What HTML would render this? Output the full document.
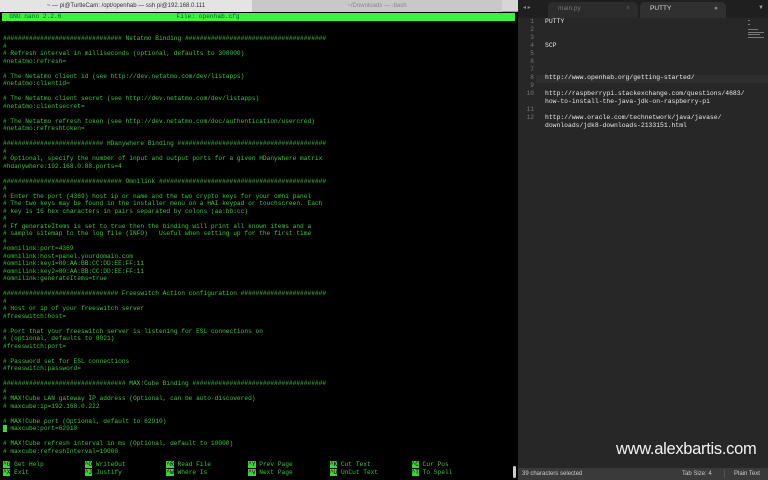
<!DOCTYPE html>
<html><head><meta charset="utf-8"><style>
*{margin:0;padding:0;box-sizing:border-box}
body{width:768px;height:480px;overflow:hidden;background:#000;position:relative;font-family:"Liberation Sans",sans-serif}
.tb{position:absolute;left:0;top:0;width:518px;height:12px;background:#d6d6d6;border-bottom:1px solid #999}
.tb .t1{position:absolute;left:0;top:0;width:252px;height:12px;background:#e4e4e4;font-size:6px;color:#333;text-align:center;line-height:12px}
.tb .t2{position:absolute;left:252px;top:0;width:250px;height:12px;background:#c8c8c8;font-size:6px;color:#888;text-align:center;line-height:12px}
.bar{position:absolute;left:2px;top:13px;width:513px;height:8px;background:#3df23d;font-family:"Liberation Mono",monospace;font-size:6.2px;line-height:8px;color:#063;white-space:pre}
pre{position:absolute;left:3px;font-family:"Liberation Mono",monospace;font-size:6.2px;line-height:7.5px;color:#3fc43f;white-space:pre}
.k{background:#3fd43f;color:#000}
.cur{background:#3fd43f}
.right{position:absolute;left:518px;top:0;width:250px;height:480px;background:#272727}
.tabs{position:absolute;left:0;top:0;width:250px;height:18px;background:#1f1f1f}
.tab{position:absolute;top:2px;height:16px;border-radius:5px 5px 0 0;font-size:6.5px;line-height:14px;padding-left:10px}
.ed{position:absolute;left:0;top:18px;font-family:"Liberation Mono",monospace;font-size:6.4px;line-height:8px;color:#e8e8e8;white-space:pre}
.ln{position:absolute;left:0;top:18px;width:16px;text-align:right;font-family:"Liberation Mono",monospace;font-size:6.2px;line-height:8px;color:#777;white-space:pre}
.st{position:absolute;left:0;top:468px;width:250px;height:12px;background:#3a3a3a;font-size:6px;color:#ccc;line-height:12px}
.wm{position:absolute;left:616px;top:440px;font-size:16.5px;color:#f2f2f2;letter-spacing:-0.3px}
</style></head><body>
<div class="tb"><div class="t1">~ — pi@TurtleCam: /opt/openhab — ssh pi@192.168.0.111</div><div class="t2">~/Downloads — -bash</div></div>
<div class="bar">  GNU nano 2.2.6                               File: openhab.cfg</div>
<pre style="top:35px">################################ Netatmo Binding ######################################
#
# Refresh interval in milliseconds (optional, defaults to 300000)
#netatmo:refresh=

# The Netatmo client id (see http://dev.netatmo.com/dev/listapps)
#netatmo:clientid=

# The Netatmo client secret (see http://dev.netatmo.com/dev/listapps)
#netatmo:clientsecret=

# The Netatmo refresh token (see http://dev.netatmo.com/doc/authentication/usercred)
#netatmo:refreshtoken=

########################### HDanywhere Binding ########################################
#
# Optional, specify the number of input and output ports for a given HDanywhere matrix
#hdanywhere:192.168.0.88.ports=4

################################ Omnilink #############################################
#
# Enter the port (4369) host ip or name and the two crypto keys for your omni panel
# The two keys may be found in the installer menu on a HAI keypad or touchscreen. Each
# key is 16 hex characters in pairs separated by colons (aa:bb:cc)
#
# Ff generateItems is set to true then the binding will print all known items and a
# sample sitemap to the log file (INFO)   Useful when setting up for the first time
#
#omnilink:port=4369
#omnilink:host=panel.yourdomain.com
#omnilink:key1=00:AA:BB:CC:DD:EE:FF:11
#omnilink:key2=00:AA:BB:CC:DD:EE:FF:11
#omnilink:generateItems=true

############################### Freeswitch Action configuration #######################
#
# Host or ip of your freeswitch server
#freeswitch:host=

# Port that your freeswitch server is listening for ESL connections on
# (optional, defaults to 8021)
#freeswitch:port=

# Password set for ESL connections
#freeswitch:password=

################################# MAX!Cube Binding ####################################
#
# MAX!Cube LAN gateway IP address (Optional, can be auto-discovered)
# maxcube:ip=192.168.0.222

# MAX!Cube port (Optional, default to 62910)
<span class="cur"> </span> maxcube:port=62910

# MAX!Cube refresh interval in ms (Optional, default to 10000)
# maxcube:refreshInterval=10000</pre>
<pre style="top:461px;line-height:7.8px"><span class="k">^G</span> Get Help           <span class="k">^O</span> WriteOut           <span class="k">^R</span> Read File          <span class="k">^Y</span> Prev Page          <span class="k">^K</span> Cut Text           <span class="k">^C</span> Cur Pos
<span class="k">^X</span> Exit               <span class="k">^J</span> Justify            <span class="k">^W</span> Where Is           <span class="k">^V</span> Next Page          <span class="k">^U</span> UnCut Text         <span class="k">^T</span> To Spell</pre>
<div style="position:absolute;left:513px;top:466px;width:3px;height:12px;background:#ccc;border-radius:2px"></div>
<div class="right">
<div class="tabs">
<div style="position:absolute;left:5px;top:4px;font-size:6px;color:#888">◂ ▸</div>
<div class="tab" style="left:30px;width:90px;background:#2c2c2c;color:#777">main.py<span style="position:absolute;right:8px;color:#666">×</span></div>
<div class="tab" style="left:122px;width:86px;background:#303030;color:#ddd">PUTTY<span style="position:absolute;right:8px;color:#888">●</span></div>
<div style="position:absolute;left:240px;top:5px;font-size:6px;color:#999">▼</div>
</div>
<div class="ln">1
2
3
4
5
6
7
8
9
10

11
12</div>
<div style="position:absolute;left:18px;top:75px;width:232px;height:8px;background:#2e2e2e"></div>
<div class="ed" style="left:27px">PUTTY


SCP



http://www.openhab.org/getting-started/

http://raspberrypi.stackexchange.com/questions/4683/
how-to-install-the-java-jdk-on-raspberry-pi

http://www.oracle.com/technetwork/java/javase/
downloads/jdk8-downloads-2133151.html</div>
<div style="position:absolute;left:230px;top:19px;width:18px;height:18px;opacity:.5">
<div style="height:1px;width:2px;background:#ccc;margin-top:1px"></div>
<div style="height:1px;width:2px;background:#ccc;margin-top:3px"></div>
<div style="height:1px;width:10px;background:#ccc;margin-top:4px"></div>
<div style="height:1px;width:16px;background:#ccc;margin-top:2px"></div>
<div style="height:1px;width:12px;background:#ccc;margin-top:1px"></div>
<div style="height:1px;width:16px;background:#ccc;margin-top:2px"></div>
</div>
<div class="st"><span style="padding-left:4px">39 characters selected</span><span style="position:absolute;left:164px">Tab Size: 4</span><span style="position:absolute;left:206px;top:2px;height:8px;border-left:1px solid #555"></span><span style="position:absolute;left:216px">Plain Text</span></div>
</div>
<div class="wm">www.alexbartis.com</div>
</body></html>
